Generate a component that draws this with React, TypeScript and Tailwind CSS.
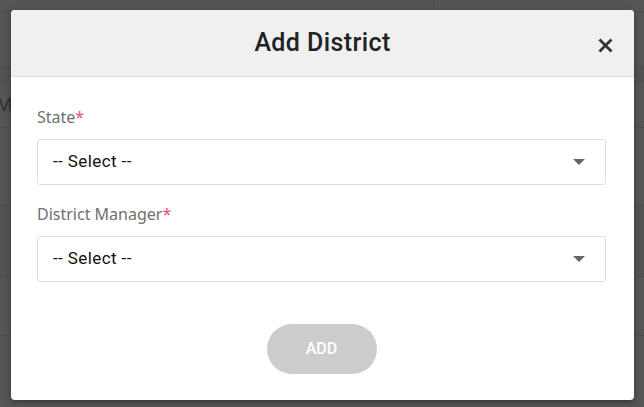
import React from "react";

function Caret() {
  return (
    <svg width="12" height="6" viewBox="0 0 12 6" className="shrink-0">
      <path d="M0 0 L12 0 L6 6 Z" fill="#666666" />
    </svg>
  );
}

function SelectBox() {
  return (
    <div className="flex h-[46px] items-center justify-between rounded-[3px] border border-[#dedede] bg-white pl-[15px] pr-[20px]">
      <span className="text-[17px] tracking-[0.4px] text-[#111] [font-family:Roboto,'Liberation_Sans',sans-serif]">
        -- Select --
      </span>
      <Caret />
    </div>
  );
}

function Label({ text }: { text: string }) {
  return (
    <div className="text-[16px] leading-[24px] text-[#707070] [font-family:'Noto_Sans','Open_Sans',sans-serif]">
      {text}
      <span className="text-[#e8506b]">*</span>
    </div>
  );
}

export default function App() {
  return (
    <div className="relative h-[407px] w-[644px] overflow-hidden bg-[#555555]">
      {/* background page behind overlay */}
      <div className="flex flex-col">
        <div className="h-[12px] border-b border-[#4c4c4c]">
          <div className="ml-[433px] h-full border-l border-[#4c4c4c]" />
        </div>
        <div className="h-[56px] border-b border-[#4c4c4c]" />
        <div className="h-[14px] border-b border-[#4c4c4c] bg-[#525252]" />
        <div className="flex h-[46px] items-center border-b border-[#4c4c4c]">
          <span className="-ml-[4px] text-[18px] text-[#2e2e2e] [font-family:'Noto_Sans',sans-serif]">
            Ma
          </span>
        </div>
        <div className="h-[78px] border-b border-[#4c4c4c]" />
        <div className="h-[71px] border-b border-[#4c4c4c] bg-[#535353]" />
        <div className="h-[59px] border-b border-[#4c4c4c]" />
        <div className="h-[71px]" />
      </div>

      {/* modal */}
      <div className="absolute left-[11px] top-[10px] flex h-[390px] w-[623px] flex-col overflow-hidden rounded-[4px] bg-white shadow-[0_2px_6px_rgba(0,0,0,0.35)]">
        <div className="relative flex h-[67px] shrink-0 items-center justify-center border-b border-[#dcdcdc] bg-[#f0f0f0]">
          <h1 className="text-[25px] font-medium tracking-[0.4px] text-[#222] [font-family:Roboto,'Liberation_Sans',sans-serif]">
            Add District
          </h1>
          <div className="absolute right-[21px] top-[28px]">
            <svg width="15" height="15" viewBox="0 0 15 15">
              <path d="M1.5 1.5 L13.5 13.5 M13.5 1.5 L1.5 13.5" stroke="#333" strokeWidth="2.8" strokeLinecap="butt" />
            </svg>
          </div>
        </div>

        <div className="flex flex-col pl-[26px] pr-[28px] pt-[28px]">
          <Label text="State" />
          <div className="mt-[10px]">
            <SelectBox />
          </div>
          <div className="mt-[17px]">
            <Label text="District Manager" />
          </div>
          <div className="mt-[10px]">
            <SelectBox />
          </div>
          <div className="mt-[42px] flex justify-center">
            <button className="h-[50px] w-[110px] rounded-full bg-[#cccccc] text-[16px] font-medium text-white [font-family:Roboto,'Liberation_Sans',sans-serif]">
              ADD
            </button>
          </div>
        </div>
      </div>
    </div>
  );
}
